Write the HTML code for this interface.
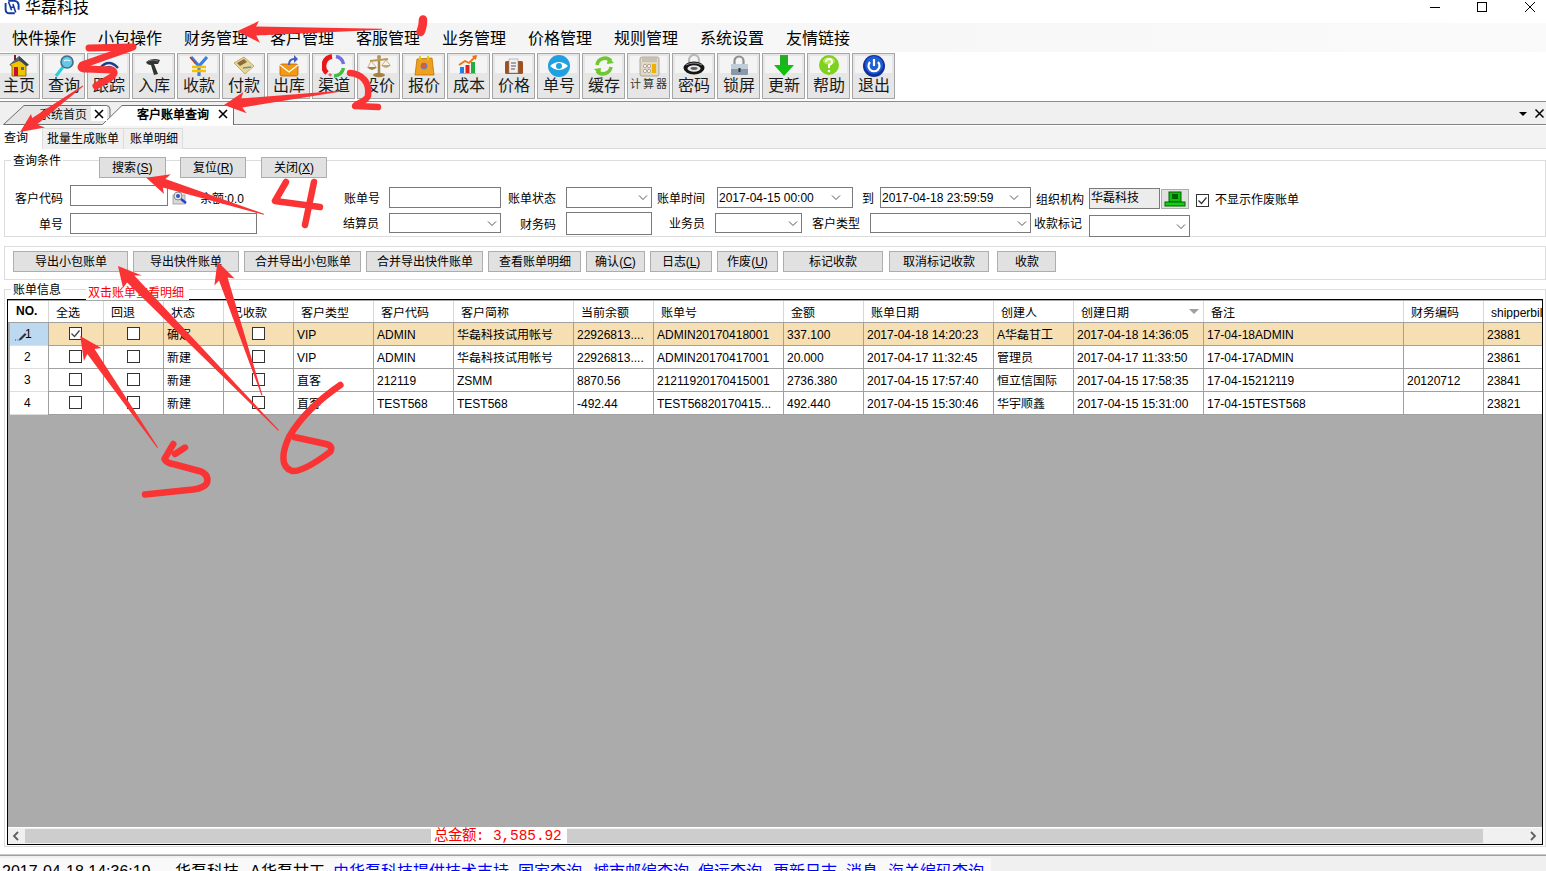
<!DOCTYPE html><html lang="zh-CN"><head><meta charset="utf-8"><style>
*{box-sizing:border-box;margin:0;padding:0}
html,body{width:1546px;height:871px;overflow:hidden;background:#fff;font-family:"Liberation Sans", sans-serif;color:#000}
.a{position:absolute}
.t{position:absolute;white-space:nowrap;line-height:1}
.btn{position:absolute;background:#e1e1e1;border:1px solid #adadad;font-size:12px;text-align:center;white-space:nowrap}
.tb{position:absolute;border:1px solid #a6a6a6;background:#e6e6e6}
.tb::before{content:'';position:absolute;left:2px;right:2px;top:2px;height:17px;background:#f4f4f4}
.tb span{position:absolute;left:0;right:0;top:23px;text-align:center;font-size:16px;line-height:18px;color:#1a1a1a;font-weight:500;letter-spacing:0px}
.inp{position:absolute;background:#fff;border:1px solid #7a7a7a}
.lbl{position:absolute;font-size:12px;line-height:12px;white-space:nowrap}
.cb{position:absolute;width:13px;height:13px;border:1px solid #333;background:#fff}
.cell{position:absolute;font-size:12px;line-height:12px;white-space:nowrap;overflow:hidden}
.lnk{color:#0000ff}
</style></head><body>

<div id="root">
<svg class="a" style="left:4px;top:0px" width="16" height="16" viewBox="0 0 16 16">
<path d="M1.6 3 L1.6 9.5 Q1.8 13.3 5.5 13.3 L10.8 13.3" fill="none" stroke="#1239a0" stroke-width="1.9"/>
<path d="M4.3 0.9 L10.5 0.9 Q13.8 1.2 14.6 4.5 L14.6 9.8" fill="none" stroke="#1239a0" stroke-width="1.9"/>
<path d="M4.5 1.7 L7.6 10.3 M8.9 4.1 L11.7 12.6 M6.8 7.2 L10.2 7.2" fill="none" stroke="#1239a0" stroke-width="1.6"/>
</svg>
<div class="t" style="left:25px;top:0px;font-size:16px;line-height:16px;color:#000">华磊科技</div>
<div class="a" style="left:1430px;top:7px;width:10px;height:1px;background:#000"></div>
<div class="a" style="left:1477px;top:2px;width:10px;height:10px;border:1px solid #000"></div>
<svg class="a" style="left:1524px;top:1px" width="12" height="12" viewBox="0 0 12 12"><path d="M1 1 L11 11 M11 1 L1 11" stroke="#000" stroke-width="1"/></svg>
<div class="a" style="left:0;top:23px;width:1546px;height:29px;background:linear-gradient(90deg,#f0f0f0,#f6f6f6 40%,#fafafa)"></div>
<div class="t" style="left:12px;top:31px;font-size:16px;line-height:16px">快件操作</div>
<div class="t" style="left:98px;top:31px;font-size:16px;line-height:16px">小包操作</div>
<div class="t" style="left:184px;top:31px;font-size:16px;line-height:16px">财务管理</div>
<div class="t" style="left:270px;top:31px;font-size:16px;line-height:16px">客户管理</div>
<div class="t" style="left:356px;top:31px;font-size:16px;line-height:16px">客服管理</div>
<div class="t" style="left:442px;top:31px;font-size:16px;line-height:16px">业务管理</div>
<div class="t" style="left:528px;top:31px;font-size:16px;line-height:16px">价格管理</div>
<div class="t" style="left:614px;top:31px;font-size:16px;line-height:16px">规则管理</div>
<div class="t" style="left:700px;top:31px;font-size:16px;line-height:16px">系统设置</div>
<div class="t" style="left:786px;top:31px;font-size:16px;line-height:16px">友情链接</div>
<div class="tb" style="left:-3px;top:53px;width:43px;height:46px"><span>主页</span></div>
<div class="tb" style="left:42px;top:53px;width:43px;height:46px"><span>查询</span></div>
<div class="tb" style="left:87px;top:53px;width:43px;height:46px"><span>跟踪</span></div>
<div class="tb" style="left:132px;top:53px;width:43px;height:46px"><span>入库</span></div>
<div class="tb" style="left:177px;top:53px;width:43px;height:46px"><span>收款</span></div>
<div class="tb" style="left:222px;top:53px;width:43px;height:46px"><span>付款</span></div>
<div class="tb" style="left:267px;top:53px;width:43px;height:46px"><span>出库</span></div>
<div class="tb" style="left:312px;top:53px;width:43px;height:46px"><span>渠道</span></div>
<div class="tb" style="left:357px;top:53px;width:43px;height:46px"><span>设价</span></div>
<div class="tb" style="left:402px;top:53px;width:43px;height:46px"><span>报价</span></div>
<div class="tb" style="left:447px;top:53px;width:43px;height:46px"><span>成本</span></div>
<div class="tb" style="left:492px;top:53px;width:43px;height:46px"><span>价格</span></div>
<div class="tb" style="left:537px;top:53px;width:43px;height:46px"><span>单号</span></div>
<div class="tb" style="left:582px;top:53px;width:43px;height:46px"><span>缓存</span></div>
<div class="tb" style="left:627px;top:53px;width:43px;height:46px"><span style="font-size:11px;top:21px;letter-spacing:2px;padding-left:2px;color:#333">计算器</span></div>
<div class="tb" style="left:672px;top:53px;width:43px;height:46px"><span>密码</span></div>
<div class="tb" style="left:717px;top:53px;width:43px;height:46px"><span>锁屏</span></div>
<div class="tb" style="left:762px;top:53px;width:43px;height:46px"><span>更新</span></div>
<div class="tb" style="left:807px;top:53px;width:43px;height:46px"><span>帮助</span></div>
<div class="tb" style="left:852px;top:53px;width:43px;height:46px"><span>退出</span></div>
<div class="a" style="left:0;top:101px;width:1546px;height:1px;background:#8c8c8c"></div>
<svg class="a" style="left:6.5px;top:54px" width="24" height="24" viewBox="0 0 24 24"><path d="M12 3 L21 11 L19 12 L19 22 L5 22 L5 12 L3 11 Z" fill="#f2c400" stroke="#7a5a00" stroke-width="0.8"/><path d="M12 2 L22 11 L12 7 L2 11 Z" fill="#556070"/><path d="M12 2 L22 11 L19 12 L12 6 Z" fill="#3b4450"/><rect x="7" y="13" width="4" height="9" fill="#c8102e"/><rect x="14" y="13" width="3" height="3" fill="#2a6bd1"/><rect x="7" y="1" width="2" height="5" fill="#7a2020"/></svg>
<svg class="a" style="left:51.5px;top:54px" width="24" height="24" viewBox="0 0 24 24"><path d="M4 22 L11 13" stroke="#20d0e0" stroke-width="3"/><circle cx="15" cy="8" r="6" fill="#60c8e8" stroke="#4a6a80" stroke-width="1.6"/><path d="M12 7 Q15 5 18 7" stroke="#fff" stroke-width="1.2" fill="none"/></svg>
<svg class="a" style="left:96.5px;top:54px" width="24" height="24" viewBox="0 0 24 24"><path d="M3 14 Q12 4 21 14" stroke="#1a3f8a" stroke-width="2.4" fill="none"/><path d="M7 16 Q12 10 17 16" stroke="#1a3f8a" stroke-width="2.4" fill="none"/><path d="M10 18 Q12 16 14 18" stroke="#1a3f8a" stroke-width="2" fill="none"/></svg>
<svg class="a" style="left:141.5px;top:54px" width="24" height="24" viewBox="0 0 24 24"><path d="M4 8 Q10 3 18 6 L16 10 L12 10 L16 20 L12 21 L9 11 Q5 11 4 8 Z" fill="#333"/><path d="M6 7 Q11 5 16 7" stroke="#777" stroke-width="1" fill="none"/></svg>
<svg class="a" style="left:186.5px;top:54px" width="24" height="24" viewBox="0 0 24 24"><path d="M4 3 L12 12 L20 3" stroke="#3a80e0" stroke-width="3.2" fill="none"/><path d="M12 12 L12 22" stroke="#3a80e0" stroke-width="3.2"/><path d="M5 13 L19 13 M5 17 L19 17" stroke="#f5c000" stroke-width="2.4"/><path d="M3 3 L9 10" stroke="#c04020" stroke-width="1.5"/></svg>
<svg class="a" style="left:231.5px;top:54px" width="24" height="24" viewBox="0 0 24 24"><path d="M2 9 L12 3 L22 12 L13 20 Z" fill="#e8d590" stroke="#b89a50" stroke-width="0.8"/><path d="M5 9 L12 5 L15 8 L8 12 Z" fill="#8a6a40"/><path d="M11 14 L19 13" stroke="#5a90d0" stroke-width="1.5"/></svg>
<svg class="a" style="left:276.5px;top:54px" width="24" height="24" viewBox="0 0 24 24"><rect x="3" y="10" width="18" height="12" rx="2" fill="#f29a10" stroke="#c06000" stroke-width="0.8"/><path d="M3 11 L12 18 L21 11" stroke="#fff" stroke-width="1.3" fill="none"/><path d="M11 11 Q11 4 17 4 L17 1 L21 5 L17 9 L17 6 Q13 6 13 11 Z" fill="#4060c0"/></svg>
<svg class="a" style="left:321.5px;top:54px" width="24" height="24" viewBox="0 0 24 24"><path d="M10 2.5 A9.5 9.5 0 0 0 5 19" stroke="#e81818" stroke-width="5" fill="none"/><path d="M14 2.5 A9.5 9.5 0 0 1 21.5 10" stroke="#7070e0" stroke-width="3.5" fill="none"/><path d="M21.5 14 A9.5 9.5 0 0 1 12 22" stroke="#40c040" stroke-width="3.5" fill="none"/><path d="M7 20 A9.5 9.5 0 0 0 9.5 21.5" stroke="#f06060" stroke-width="2.5" fill="none"/></svg>
<svg class="a" style="left:366.5px;top:54px" width="24" height="24" viewBox="0 0 24 24"><path d="M12 2 L12 20" stroke="#a88848" stroke-width="2.5"/><path d="M3 7 L21 5" stroke="#b89858" stroke-width="2"/><path d="M0 13 Q5 19 10 13 Z" fill="#a88040"/><path d="M4 7 L1 13 M4 7 L9 13" stroke="#c0a060" stroke-width="0.8"/><path d="M14 11 Q19 17 24 11 Z" fill="#c8a870"/><path d="M19 6 L15 11 M19 6 L23 11" stroke="#c0a060" stroke-width="0.8"/><ellipse cx="12" cy="21" rx="6" ry="2.2" fill="#a88040"/><circle cx="12" cy="3" r="2" fill="#b89858"/></svg>
<svg class="a" style="left:411.5px;top:54px" width="24" height="24" viewBox="0 0 24 24"><path d="M5 5 L20 4 L22 21 L3 21 Z" fill="#f0a020" stroke="#c07000" stroke-width="0.8"/><path d="M8 2 L8 6 M16 2 L16 6" stroke="#d8d000" stroke-width="1.8"/><circle cx="12" cy="12" r="3" fill="#d06040" stroke="#6080c0" stroke-width="1"/></svg>
<svg class="a" style="left:456.5px;top:54px" width="24" height="24" viewBox="0 0 24 24"><rect x="3" y="13" width="4" height="6" fill="#2080e0"/><rect x="8.5" y="11" width="4" height="8" fill="#e02020"/><rect x="14" y="8" width="4" height="11" fill="#20b040"/><path d="M2 11 L8 7 L12 9 L18 3" stroke="#f07010" stroke-width="1.8" fill="none"/><path d="M15 2 L20 1 L19 6 Z" fill="#f07010"/><rect x="2" y="19" width="17" height="1" fill="#d0a080"/></svg>
<svg class="a" style="left:501.5px;top:54px" width="24" height="24" viewBox="0 0 24 24"><rect x="3" y="7" width="18" height="13" rx="1.5" fill="#a05020"/><rect x="7" y="5" width="9" height="14" fill="#f0f0f0" stroke="#888" stroke-width="0.5"/><path d="M9 9 L14 9 M9 12 L14 12 M9 15 L13 15" stroke="#555" stroke-width="1"/></svg>
<svg class="a" style="left:546.5px;top:54px" width="24" height="24" viewBox="0 0 24 24"><circle cx="12" cy="12" r="11" fill="#20a0e0"/><path d="M3 12 Q12 4 21 12 Q12 20 3 12 Z" fill="#fff"/><circle cx="12" cy="12" r="3" fill="#20a0e0"/></svg>
<svg class="a" style="left:591.5px;top:54px" width="24" height="24" viewBox="0 0 24 24"><path d="M5 11 A8 8 0 0 1 19 7" stroke="#70c830" stroke-width="3.5" fill="none"/><path d="M19 13 A8 8 0 0 1 5 17" stroke="#70c830" stroke-width="3.5" fill="none"/><path d="M16 3 L22 9 L15 10 Z M8 21 L2 15 L9 14 Z" fill="#70c830"/></svg>
<svg class="a" style="left:636.5px;top:54px" width="24" height="24" viewBox="0 0 24 24"><rect x="3" y="3" width="19" height="19" rx="2" fill="#e0d8c8" stroke="#a09880" stroke-width="0.8"/><rect x="5" y="4" width="15" height="4" fill="#c8c0b0"/><circle cx="8" cy="12" r="1.6" fill="#fff" stroke="#987" stroke-width="0.7"/><circle cx="12" cy="12" r="1.6" fill="#fff" stroke="#987" stroke-width="0.7"/><circle cx="8" cy="17" r="1.6" fill="#fff" stroke="#987" stroke-width="0.7"/><circle cx="12" cy="17" r="1.6" fill="#fff" stroke="#987" stroke-width="0.7"/><rect x="15" y="10" width="4" height="9" fill="#f0b000"/></svg>
<svg class="a" style="left:681.5px;top:54px" width="24" height="24" viewBox="0 0 24 24"><path d="M7 10 L7 6 A5 5 0 0 1 17 6 L17 10" stroke="#b8b8b8" stroke-width="2.2" fill="none"/><ellipse cx="12" cy="14" rx="10.5" ry="6.5" fill="#151515"/><ellipse cx="12" cy="14.5" rx="6.5" ry="3.2" fill="#e8e8e8"/><ellipse cx="12" cy="14.5" rx="3.5" ry="1.4" fill="#606060"/><path d="M4 11 Q12 7 20 11" stroke="#888" stroke-width="1" fill="none"/></svg>
<svg class="a" style="left:726.5px;top:54px" width="24" height="24" viewBox="0 0 24 24"><path d="M7.5 10 L7.5 7 A4.5 4.5 0 0 1 16.5 7 L16.5 10" stroke="#909090" stroke-width="2.2" fill="none"/><rect x="4" y="10" width="17" height="11" rx="1" fill="#8898a8"/><rect x="4" y="10" width="17" height="5" fill="#c0ccd8"/><rect x="11.5" y="14" width="2" height="4" fill="#333"/></svg>
<svg class="a" style="left:771.5px;top:54px" width="24" height="24" viewBox="0 0 24 24"><rect x="8" y="1" width="8" height="11" fill="#20b020"/><path d="M2 11 L22 11 L12 22 Z" fill="#10c010"/></svg>
<svg class="a" style="left:816.5px;top:54px" width="24" height="24" viewBox="0 0 24 24"><circle cx="12" cy="11" r="10" fill="#80d020"/><ellipse cx="12" cy="7" rx="6" ry="3.5" fill="#c0f060" opacity="0.8"/><path d="M9 8 Q9 5 12 5 Q15 5 15 8 Q15 10 12 11 L12 14" stroke="#fff" stroke-width="2" fill="none"/><circle cx="12" cy="17" r="1.3" fill="#fff"/></svg>
<svg class="a" style="left:861.5px;top:54px" width="24" height="24" viewBox="0 0 24 24"><circle cx="12" cy="12" r="11" fill="#1030a0"/><circle cx="12" cy="11" r="9" fill="#2060d0"/><path d="M8 8 A5.5 5.5 0 1 0 16 8" stroke="#fff" stroke-width="2.2" fill="none"/><path d="M12 5 L12 12" stroke="#fff" stroke-width="2.2"/></svg>
<div class="a" style="left:0;top:102px;width:1546px;height:23px;background:#f0f0f0"></div>
<div class="a" style="left:233px;top:124px;width:1313px;height:1px;background:#828282"></div>
<div class="a" style="left:233px;top:108px;width:1px;height:17px;background:#828282"></div>
<svg class="a" style="left:0;top:104px" width="240" height="22" viewBox="0 0 240 22">
<path d="M3.5 20.5 L24 1.5 L106 1.5 Q110 1.5 110 5 L110 20.5 Z" fill="#e6e6e6" stroke="#6e6e6e" stroke-width="1"/>
<path d="M102.5 20.5 L122 1.5 L233.5 1.5 L233.5 21 L102.5 21 Z" fill="#ffffff" stroke="none"/>
<path d="M102.5 20.5 L122 1.5 L233.5 1.5 L233.5 21" fill="none" stroke="#6e6e6e" stroke-width="1"/>
</svg>
<div class="a" style="left:91px;top:106px;width:16px;height:15px;background:#fff"></div>
<div class="t" style="left:39px;top:108px;font-size:12px;line-height:14px;color:#111">系统首页</div>
<svg class="a" style="left:94px;top:109px" width="10" height="10" viewBox="0 0 10 10"><path d="M1 1 L9 9 M9 1 L1 9" stroke="#000" stroke-width="1.6"/></svg>
<div class="t" style="left:137px;top:108px;font-size:12px;line-height:14px;color:#000;font-weight:bold">客户账单查询</div>
<svg class="a" style="left:218px;top:109px" width="10" height="10" viewBox="0 0 10 10"><path d="M1 1 L9 9 M9 1 L1 9" stroke="#000" stroke-width="1.6"/></svg>
<svg class="a" style="left:1518px;top:110px" width="10" height="8" viewBox="0 0 10 8"><path d="M1 2 L9 2 L5 6 Z" fill="#000"/></svg>
<svg class="a" style="left:1534px;top:108px" width="11" height="11" viewBox="0 0 11 11"><path d="M1.5 1.5 L9.5 9.5 M9.5 1.5 L1.5 9.5" stroke="#000" stroke-width="1.5"/></svg>
<div class="a" style="left:0;top:126px;width:1546px;height:23px;background:#f3f3f3;border-bottom:1px solid #dadada"></div>
<div class="a" style="left:0;top:126px;width:42px;height:23px;background:#fff"></div>
<div class="a" style="left:42px;top:128px;width:82px;height:21px;background:#f0f0f0;border:1px solid #dcdcdc;border-bottom:none"></div>
<div class="a" style="left:124px;top:128px;width:59px;height:21px;background:#f0f0f0;border:1px solid #dcdcdc;border-left:none;border-bottom:none"></div>
<div class="lbl" style="left:4px;top:132px;font-size:12px;line-height:12px">查询</div>
<div class="lbl" style="left:47px;top:133px">批量生成账单</div>
<div class="lbl" style="left:130px;top:133px">账单明细</div>
<div class="a" style="left:4px;top:160px;width:1542px;height:77px;border:1px solid #dcdcdc"></div>
<div class="lbl" style="left:11px;top:155px;background:#fff;padding:0 2px">查询条件</div>
<div class="btn" style="left:99px;top:157px;width:67px;height:21px;line-height:21px">搜索(<u>S</u>)</div>
<div class="btn" style="left:180px;top:157px;width:66px;height:21px;line-height:21px">复位(<u>R</u>)</div>
<div class="btn" style="left:261px;top:157px;width:66px;height:21px;line-height:21px">关闭(<u>X</u>)</div>
<div class="lbl" style="left:15px;top:193px;">客户代码</div>
<div class="inp" style="left:70px;top:185px;width:98px;height:21px;background:#fff"></div>
<svg class="a" style="left:172px;top:191px" width="16" height="14" viewBox="0 0 16 14"><rect x="1" y="4" width="12" height="9" fill="#d8d8d8" stroke="#999" stroke-width="0.8"/><circle cx="6" cy="5" r="4" fill="#e8e8e8" stroke="#888" stroke-width="1"/><circle cx="6" cy="5" r="2" fill="#3050c0"/><path d="M9 8 L14 12" stroke="#2040e0" stroke-width="2.5"/></svg>
<div class="lbl" style="left:200px;top:193px;color:#000">余额:0.0</div>
<div class="lbl" style="left:344px;top:193px;">账单号</div>
<div class="inp" style="left:389px;top:187px;width:112px;height:21px;background:#fff"></div>
<div class="lbl" style="left:508px;top:193px;">账单状态</div>
<div class="inp" style="left:566px;top:187px;width:86px;height:21px;background:#fff"></div>
<svg class="a" style="left:637.5px;top:194.0px" width="10" height="7" viewBox="0 0 10 7"><path d="M1 1.5 L5 5.5 L9 1.5" stroke="#555" stroke-width="1" fill="none"/></svg>
<div class="lbl" style="left:657px;top:193px;">账单时间</div>
<div class="inp" style="left:717px;top:187px;width:136px;height:21px;background:#fff"></div>
<svg class="a" style="left:831px;top:194.0px" width="10" height="7" viewBox="0 0 10 7"><path d="M1 1.5 L5 5.5 L9 1.5" stroke="#555" stroke-width="1" fill="none"/></svg>
<div class="lbl" style="left:719px;top:192px;font-size:12px">2017-04-15 00:00</div>
<div class="lbl" style="left:862px;top:193px;">到</div>
<div class="inp" style="left:880px;top:187px;width:151px;height:21px;background:#fff"></div>
<svg class="a" style="left:1009px;top:194.0px" width="10" height="7" viewBox="0 0 10 7"><path d="M1 1.5 L5 5.5 L9 1.5" stroke="#555" stroke-width="1" fill="none"/></svg>
<div class="lbl" style="left:882px;top:192px;">2017-04-18 23:59:59</div>
<div class="lbl" style="left:1036px;top:194px;">组织机构</div>
<div class="inp" style="left:1089px;top:188px;width:71px;height:21px;background:#ececec"></div>
<div class="lbl" style="left:1091px;top:192px;">华磊科技</div>
<div class="a" style="left:1161px;top:189px;width:28px;height:20px;background:#e1e1e1;border:1px solid #adadad"></div>
<svg class="a" style="left:1164px;top:190px" width="22" height="18" viewBox="0 0 22 18"><rect x="5" y="2" width="12" height="10" fill="#10c010" stroke="#006000" stroke-width="1"/><rect x="8" y="4" width="6" height="5" fill="#006000"/><rect x="1" y="12" width="20" height="4" fill="#10d010" stroke="#006000" stroke-width="1"/></svg>
<div class="cb" style="left:1196px;top:194px;width:13px;height:13px;border-color:#333"></div>
<svg class="a" style="left:1196px;top:194px" width="13" height="13" viewBox="0 0 13 13"><path d="M2.5 6.5 L5.5 9.5 L10.5 3.5" stroke="#333" stroke-width="1.2" fill="none"/></svg>
<div class="lbl" style="left:1215px;top:194px;">不显示作废账单</div>
<div class="lbl" style="left:39px;top:219px;">单号</div>
<div class="inp" style="left:70px;top:213px;width:187px;height:21px;background:#fff"></div>
<div class="lbl" style="left:343px;top:218px;">结算员</div>
<div class="inp" style="left:389px;top:213px;width:112px;height:20px;background:#fff"></div>
<svg class="a" style="left:486.5px;top:219.5px" width="10" height="7" viewBox="0 0 10 7"><path d="M1 1.5 L5 5.5 L9 1.5" stroke="#555" stroke-width="1" fill="none"/></svg>
<div class="lbl" style="left:520px;top:219px;">财务码</div>
<div class="inp" style="left:566px;top:212px;width:86px;height:23px;background:#fff"></div>
<div class="lbl" style="left:669px;top:218px;">业务员</div>
<div class="inp" style="left:715px;top:213px;width:87px;height:20px;background:#fff"></div>
<svg class="a" style="left:787.5px;top:219.5px" width="10" height="7" viewBox="0 0 10 7"><path d="M1 1.5 L5 5.5 L9 1.5" stroke="#555" stroke-width="1" fill="none"/></svg>
<div class="lbl" style="left:812px;top:218px;">客户类型</div>
<div class="inp" style="left:870px;top:213px;width:161px;height:20px;background:#fff"></div>
<svg class="a" style="left:1016.5px;top:219.5px" width="10" height="7" viewBox="0 0 10 7"><path d="M1 1.5 L5 5.5 L9 1.5" stroke="#555" stroke-width="1" fill="none"/></svg>
<div class="lbl" style="left:1034px;top:218px;">收款标记</div>
<div class="inp" style="left:1089px;top:215px;width:101px;height:22px;background:#fff"></div>
<svg class="a" style="left:1175.5px;top:222.5px" width="10" height="7" viewBox="0 0 10 7"><path d="M1 1.5 L5 5.5 L9 1.5" stroke="#555" stroke-width="1" fill="none"/></svg>
<div class="a" style="left:4px;top:246px;width:1542px;height:34px;border:1px solid #dcdcdc"></div>
<div class="btn" style="left:13px;top:251px;width:115px;height:21px;line-height:21px">导出小包账单</div>
<div class="btn" style="left:133px;top:251px;width:106px;height:21px;line-height:21px">导出快件账单</div>
<div class="btn" style="left:244px;top:251px;width:117px;height:21px;line-height:21px">合并导出小包账单</div>
<div class="btn" style="left:366px;top:251px;width:117px;height:21px;line-height:21px">合并导出快件账单</div>
<div class="btn" style="left:488px;top:251px;width:93px;height:21px;line-height:21px">查看账单明细</div>
<div class="btn" style="left:586px;top:251px;width:59px;height:21px;line-height:21px">确认(<u>C</u>)</div>
<div class="btn" style="left:650px;top:251px;width:62px;height:21px;line-height:21px">日志(<u>L</u>)</div>
<div class="btn" style="left:717px;top:251px;width:61px;height:21px;line-height:21px">作废(<u>U</u>)</div>
<div class="btn" style="left:783px;top:251px;width:100px;height:21px;line-height:21px">标记收款</div>
<div class="btn" style="left:889px;top:251px;width:100px;height:21px;line-height:21px">取消标记收款</div>
<div class="btn" style="left:997px;top:251px;width:59px;height:21px;line-height:21px">收款</div>
<div class="a" style="left:4px;top:289px;width:1542px;height:558px;border:1px solid #dcdcdc"></div>
<div class="lbl" style="left:11px;top:284px;background:#fff;padding:0 2px">账单信息</div>
<div class="a" style="left:7px;top:299px;width:1536px;height:546px;border:1px solid #000;background:#ababab"></div>
<div class="a" style="left:8px;top:300px;width:1534px;height:23px;background:#fff;border-bottom:1px solid #a0a0a0"></div>
<div class="a" style="left:48px;top:323px;width:1494px;height:23px;background:#f7dfb4;border-bottom:1px solid #a0a0a0"></div>
<div class="a" style="left:10px;top:323px;width:38px;height:23px;background:#bdd9f1;border-bottom:1px solid #dedede"></div>
<div class="a" style="left:48px;top:346px;width:1494px;height:23px;background:#fff;border-bottom:1px solid #a0a0a0"></div>
<div class="a" style="left:10px;top:346px;width:38px;height:23px;background:#fff;border-bottom:1px solid #dedede"></div>
<div class="a" style="left:48px;top:369px;width:1494px;height:23px;background:#fff;border-bottom:1px solid #a0a0a0"></div>
<div class="a" style="left:10px;top:369px;width:38px;height:23px;background:#fff;border-bottom:1px solid #dedede"></div>
<div class="a" style="left:48px;top:392px;width:1494px;height:23px;background:#fff;border-bottom:1px solid #a0a0a0"></div>
<div class="a" style="left:10px;top:392px;width:38px;height:23px;background:#fff;border-bottom:1px solid #dedede"></div>
<div class="a" style="left:48px;top:301px;width:1px;height:21px;background:#d8d8d8"></div><div class="a" style="left:48px;top:323px;width:1px;height:91px;background:#a0a0a0"></div>
<div class="a" style="left:103px;top:301px;width:1px;height:21px;background:#d8d8d8"></div><div class="a" style="left:103px;top:323px;width:1px;height:91px;background:#a0a0a0"></div>
<div class="a" style="left:163px;top:301px;width:1px;height:21px;background:#d8d8d8"></div><div class="a" style="left:163px;top:323px;width:1px;height:91px;background:#a0a0a0"></div>
<div class="a" style="left:223px;top:301px;width:1px;height:21px;background:#d8d8d8"></div><div class="a" style="left:223px;top:323px;width:1px;height:91px;background:#a0a0a0"></div>
<div class="a" style="left:293px;top:301px;width:1px;height:21px;background:#d8d8d8"></div><div class="a" style="left:293px;top:323px;width:1px;height:91px;background:#a0a0a0"></div>
<div class="a" style="left:373px;top:301px;width:1px;height:21px;background:#d8d8d8"></div><div class="a" style="left:373px;top:323px;width:1px;height:91px;background:#a0a0a0"></div>
<div class="a" style="left:453px;top:301px;width:1px;height:21px;background:#d8d8d8"></div><div class="a" style="left:453px;top:323px;width:1px;height:91px;background:#a0a0a0"></div>
<div class="a" style="left:573px;top:301px;width:1px;height:21px;background:#d8d8d8"></div><div class="a" style="left:573px;top:323px;width:1px;height:91px;background:#a0a0a0"></div>
<div class="a" style="left:653px;top:301px;width:1px;height:21px;background:#d8d8d8"></div><div class="a" style="left:653px;top:323px;width:1px;height:91px;background:#a0a0a0"></div>
<div class="a" style="left:783px;top:301px;width:1px;height:21px;background:#d8d8d8"></div><div class="a" style="left:783px;top:323px;width:1px;height:91px;background:#a0a0a0"></div>
<div class="a" style="left:863px;top:301px;width:1px;height:21px;background:#d8d8d8"></div><div class="a" style="left:863px;top:323px;width:1px;height:91px;background:#a0a0a0"></div>
<div class="a" style="left:993px;top:301px;width:1px;height:21px;background:#d8d8d8"></div><div class="a" style="left:993px;top:323px;width:1px;height:91px;background:#a0a0a0"></div>
<div class="a" style="left:1073px;top:301px;width:1px;height:21px;background:#d8d8d8"></div><div class="a" style="left:1073px;top:323px;width:1px;height:91px;background:#a0a0a0"></div>
<div class="a" style="left:1203px;top:301px;width:1px;height:21px;background:#d8d8d8"></div><div class="a" style="left:1203px;top:323px;width:1px;height:91px;background:#a0a0a0"></div>
<div class="a" style="left:1403px;top:301px;width:1px;height:21px;background:#d8d8d8"></div><div class="a" style="left:1403px;top:323px;width:1px;height:91px;background:#a0a0a0"></div>
<div class="a" style="left:1483px;top:301px;width:1px;height:21px;background:#d8d8d8"></div><div class="a" style="left:1483px;top:323px;width:1px;height:91px;background:#a0a0a0"></div>
<div class="cell" style="left:16px;top:305px;font-weight:bold">NO.</div>
<div class="cell" style="left:56px;top:307px">全选</div>
<div class="cell" style="left:111px;top:307px">回退</div>
<div class="cell" style="left:171px;top:307px">状态</div>
<div class="cell" style="left:231px;top:307px">已收款</div>
<div class="cell" style="left:301px;top:307px">客户类型</div>
<div class="cell" style="left:381px;top:307px">客户代码</div>
<div class="cell" style="left:461px;top:307px">客户简称</div>
<div class="cell" style="left:581px;top:307px">当前余额</div>
<div class="cell" style="left:661px;top:307px">账单号</div>
<div class="cell" style="left:791px;top:307px">金额</div>
<div class="cell" style="left:871px;top:307px">账单日期</div>
<div class="cell" style="left:1001px;top:307px">创建人</div>
<div class="cell" style="left:1081px;top:307px">创建日期</div>
<div class="cell" style="left:1211px;top:307px">备注</div>
<div class="cell" style="left:1411px;top:307px">财务编码</div>
<div class="cell" style="left:1491px;top:307px;width:51px">shipperbill</div>
<svg class="a" style="left:1189px;top:309px" width="10" height="6" viewBox="0 0 10 6"><path d="M0 0 L10 0 L5 5 Z" fill="#a0a0a0"/></svg>
<svg class="a" style="left:14px;top:328px" width="14" height="14" viewBox="0 0 14 14"><path d="M1 12 L2 12 M3.5 12 L4.5 12" stroke="#444" stroke-width="1"/><path d="M5 12.5 L5.5 10.5 L11 5 L12.5 6.5 L7 12 Z" fill="#333"/></svg>
<div class="cell" style="left:25px;top:328px">1</div>
<div class="cb" style="left:69px;top:327px"></div>
<div class="cb" style="left:127px;top:327px"></div>
<div class="cb" style="left:252px;top:327px"></div>
<svg class="a" style="left:69px;top:327px" width="13" height="13" viewBox="0 0 13 13"><path d="M2.5 6.5 L5.5 9.5 L10.5 3.5" stroke="#444" stroke-width="1.3" fill="none"/></svg>
<div class="cell" style="left:167px;top:329px;width:56px">确定</div>
<div class="cell" style="left:297px;top:329px;width:76px">VIP</div>
<div class="cell" style="left:377px;top:329px;width:76px">ADMIN</div>
<div class="cell" style="left:457px;top:329px;width:116px">华磊科技试用帐号</div>
<div class="cell" style="left:577px;top:329px;width:76px">22926813....</div>
<div class="cell" style="left:657px;top:329px;width:126px">ADMIN20170418001</div>
<div class="cell" style="left:787px;top:329px;width:76px">337.100</div>
<div class="cell" style="left:867px;top:329px;width:126px">2017-04-18 14:20:23</div>
<div class="cell" style="left:997px;top:329px;width:76px">A华磊甘工</div>
<div class="cell" style="left:1077px;top:329px;width:126px">2017-04-18 14:36:05</div>
<div class="cell" style="left:1207px;top:329px;width:196px">17-04-18ADMIN</div>
<div class="cell" style="left:1487px;top:329px;width:55px">23881</div>
<div class="cell" style="left:24px;top:351px">2</div>
<div class="cb" style="left:69px;top:350px"></div>
<div class="cb" style="left:127px;top:350px"></div>
<div class="cb" style="left:252px;top:350px"></div>
<div class="cell" style="left:167px;top:352px;width:56px">新建</div>
<div class="cell" style="left:297px;top:352px;width:76px">VIP</div>
<div class="cell" style="left:377px;top:352px;width:76px">ADMIN</div>
<div class="cell" style="left:457px;top:352px;width:116px">华磊科技试用帐号</div>
<div class="cell" style="left:577px;top:352px;width:76px">22926813....</div>
<div class="cell" style="left:657px;top:352px;width:126px">ADMIN20170417001</div>
<div class="cell" style="left:787px;top:352px;width:76px">20.000</div>
<div class="cell" style="left:867px;top:352px;width:126px">2017-04-17 11:32:45</div>
<div class="cell" style="left:997px;top:352px;width:76px">管理员</div>
<div class="cell" style="left:1077px;top:352px;width:126px">2017-04-17 11:33:50</div>
<div class="cell" style="left:1207px;top:352px;width:196px">17-04-17ADMIN</div>
<div class="cell" style="left:1487px;top:352px;width:55px">23861</div>
<div class="cell" style="left:24px;top:374px">3</div>
<div class="cb" style="left:69px;top:373px"></div>
<div class="cb" style="left:127px;top:373px"></div>
<div class="cb" style="left:252px;top:373px"></div>
<div class="cell" style="left:167px;top:375px;width:56px">新建</div>
<div class="cell" style="left:297px;top:375px;width:76px">直客</div>
<div class="cell" style="left:377px;top:375px;width:76px">212119</div>
<div class="cell" style="left:457px;top:375px;width:116px">ZSMM</div>
<div class="cell" style="left:577px;top:375px;width:76px">8870.56</div>
<div class="cell" style="left:657px;top:375px;width:126px">21211920170415001</div>
<div class="cell" style="left:787px;top:375px;width:76px">2736.380</div>
<div class="cell" style="left:867px;top:375px;width:126px">2017-04-15 17:57:40</div>
<div class="cell" style="left:997px;top:375px;width:76px">恒立信国际</div>
<div class="cell" style="left:1077px;top:375px;width:126px">2017-04-15 17:58:35</div>
<div class="cell" style="left:1207px;top:375px;width:196px">17-04-15212119</div>
<div class="cell" style="left:1407px;top:375px;width:76px">20120712</div>
<div class="cell" style="left:1487px;top:375px;width:55px">23841</div>
<div class="cell" style="left:24px;top:397px">4</div>
<div class="cb" style="left:69px;top:396px"></div>
<div class="cb" style="left:127px;top:396px"></div>
<div class="cb" style="left:252px;top:396px"></div>
<div class="cell" style="left:167px;top:398px;width:56px">新建</div>
<div class="cell" style="left:297px;top:398px;width:76px">直客</div>
<div class="cell" style="left:377px;top:398px;width:76px">TEST568</div>
<div class="cell" style="left:457px;top:398px;width:116px">TEST568</div>
<div class="cell" style="left:577px;top:398px;width:76px">-492.44</div>
<div class="cell" style="left:657px;top:398px;width:126px">TEST56820170415...</div>
<div class="cell" style="left:787px;top:398px;width:76px">492.440</div>
<div class="cell" style="left:867px;top:398px;width:126px">2017-04-15 15:30:46</div>
<div class="cell" style="left:997px;top:398px;width:76px">华宇顺鑫</div>
<div class="cell" style="left:1077px;top:398px;width:126px">2017-04-15 15:31:00</div>
<div class="cell" style="left:1207px;top:398px;width:196px">17-04-15TEST568</div>
<div class="cell" style="left:1487px;top:398px;width:55px">23821</div>
<div class="a" style="left:8px;top:827px;width:1534px;height:1px;background:#fff"></div>
<div class="a" style="left:8px;top:828px;width:1534px;height:16px;background:#f0f0f0"></div>
<div class="a" style="left:25px;top:829px;width:1458px;height:14px;background:#cdcdcd"></div>
<svg class="a" style="left:12px;top:831px" width="8" height="10" viewBox="0 0 8 10"><path d="M6 1 L2 5 L6 9" stroke="#606060" stroke-width="1.8" fill="none"/></svg>
<svg class="a" style="left:1529px;top:831px" width="8" height="10" viewBox="0 0 8 10"><path d="M2 1 L6 5 L2 9" stroke="#606060" stroke-width="1.8" fill="none"/></svg>
<div class="t" style="left:431px;top:827px;width:136px;height:17px;background:#fff;color:#ff0000;font-family:'Liberation Mono',monospace;font-size:14.5px;line-height:18px;padding-left:3px;letter-spacing:-0.1px">总金额: 3,585.92</div>
<div class="t" style="left:86px;top:286px;width:103px;height:14px;background:#fff;color:#ff0000;font-size:12px;line-height:15px;padding-left:2px">双击账单查看明细</div>
<div class="a" style="left:8px;top:300px;width:1534px;height:1px;background:#a8a8a8"></div>
<div class="a" style="left:0;top:854px;width:1546px;height:1px;background:#c8c8c8"></div><div class="a" style="left:0;top:855px;width:1546px;height:1px;background:#a0a0a0"></div>
<div class="a" style="left:0;top:856px;width:1546px;height:15px;background:#f0f0f0"></div>
<div class="a" style="left:0;top:858px;width:991px;height:13px;background:#f9f9f9"></div>
<div class="t" style="left:2px;top:864px;font-size:16px;line-height:16px;color:#000">2017-04-18 14:36:19</div>
<div class="t" style="left:175px;top:864px;font-size:16px;line-height:16px;color:#000">华磊科技</div>
<div class="t" style="left:250px;top:864px;font-size:16px;line-height:16px;color:#000">A华磊甘工</div>
<div class="t" style="left:333px;top:864px;font-size:16px;line-height:16px;color:#0000ff">由华磊科技提供技术支持</div>
<div class="t" style="left:518px;top:864px;font-size:16px;line-height:16px;color:#0000ff">国家查询</div>
<div class="t" style="left:593px;top:864px;font-size:16px;line-height:16px;color:#0000ff">城市邮编查询</div>
<div class="t" style="left:698px;top:864px;font-size:16px;line-height:16px;color:#0000ff">偏远查询</div>
<div class="t" style="left:773px;top:864px;font-size:16px;line-height:16px;color:#0000ff">更新日志</div>
<div class="t" style="left:846px;top:864px;font-size:16px;line-height:16px;color:#0000ff">消息</div>
<div class="t" style="left:888px;top:864px;font-size:16px;line-height:16px;color:#0000ff">海关编码查询</div>
<svg class="a" style="left:0;top:0" width="1546" height="871" viewBox="0 0 1546 871"><path d="M237.0 31.3 L260.0 42.7 L256.2 35.5 L382.0 29.7 L382.0 28.7 L256.0 26.5 L259.0 21.0 Z" fill="#fa3434"/><path d="M224.0 105.0 L246.6 113.3 L242.3 107.4 L339.8 91.8 L339.6 90.8 L241.3 98.4 L243.3 92.0 Z" fill="#fa3434"/><path d="M20.0 132.0 L45.0 127.4 L36.9 124.6 L83.3 86.2 L82.7 85.4 L32.2 118.1 L31.0 114.0 Z" fill="#fa3434"/><path d="M146.3 177.7 L164.0 194.0 L162.8 187.6 L263.7 214.8 L263.9 213.8 L165.5 179.0 L170.7 174.3 Z" fill="#fa3434"/><path d="M80.2 336.1 L83.9 360.9 L87.3 354.1 L157.2 447.9 L158.0 447.3 L94.6 349.0 L101.4 348.0 Z" fill="#fa3434"/><path d="M118.0 266.0 L123.0 288.0 L127.1 282.5 L278.1 430.7 L278.9 430.1 L134.3 275.5 L142.0 275.5 Z" fill="#fa3434"/><path d="M217.5 261.6 L214.4 285.4 L219.0 280.4 L261.5 395.6 L262.5 395.2 L227.6 277.6 L234.6 278.6 Z" fill="#fa3434"/><path d="M423 19.5 Q423 27 420.5 32" fill="none" stroke="#fa3434" stroke-linecap="round" stroke-linejoin="round" stroke-width="8.5"/><path d="M89 48 L133 47 L82 65 Q79 69 86 69 L112 70 Q117 73 110 78 L96 86" fill="none" stroke="#fa3434" stroke-linecap="round" stroke-linejoin="round" stroke-width="7"/><path d="M350 73 C362 74 370 82 368 96 C366 102 355 104 355 106 L378 107" fill="none" stroke="#fa3434" stroke-linecap="round" stroke-linejoin="round" stroke-width="6.5"/><path d="M286 182 L275 201 L320 207 M314 182 L305 225" fill="none" stroke="#fa3434" stroke-linecap="round" stroke-linejoin="round" stroke-width="6.5"/><path d="M173.3 444 L164.5 459 Q166 463 175 464.5 L201 471.5 Q209 475 207 483 Q204 488 193 489.5 L145 494.5 M175 454 L185 447.6" fill="none" stroke="#fa3434" stroke-linecap="round" stroke-linejoin="round" stroke-width="6.5"/><path d="M340.4 385 C320 399 300 418 289 437 C282 452 280 467 292 471 C302 472 318 461 330 452 Q334 446 326 444 L294 437" fill="none" stroke="#fa3434" stroke-linecap="round" stroke-linejoin="round" stroke-width="6.5"/></svg>
</div></body></html>
